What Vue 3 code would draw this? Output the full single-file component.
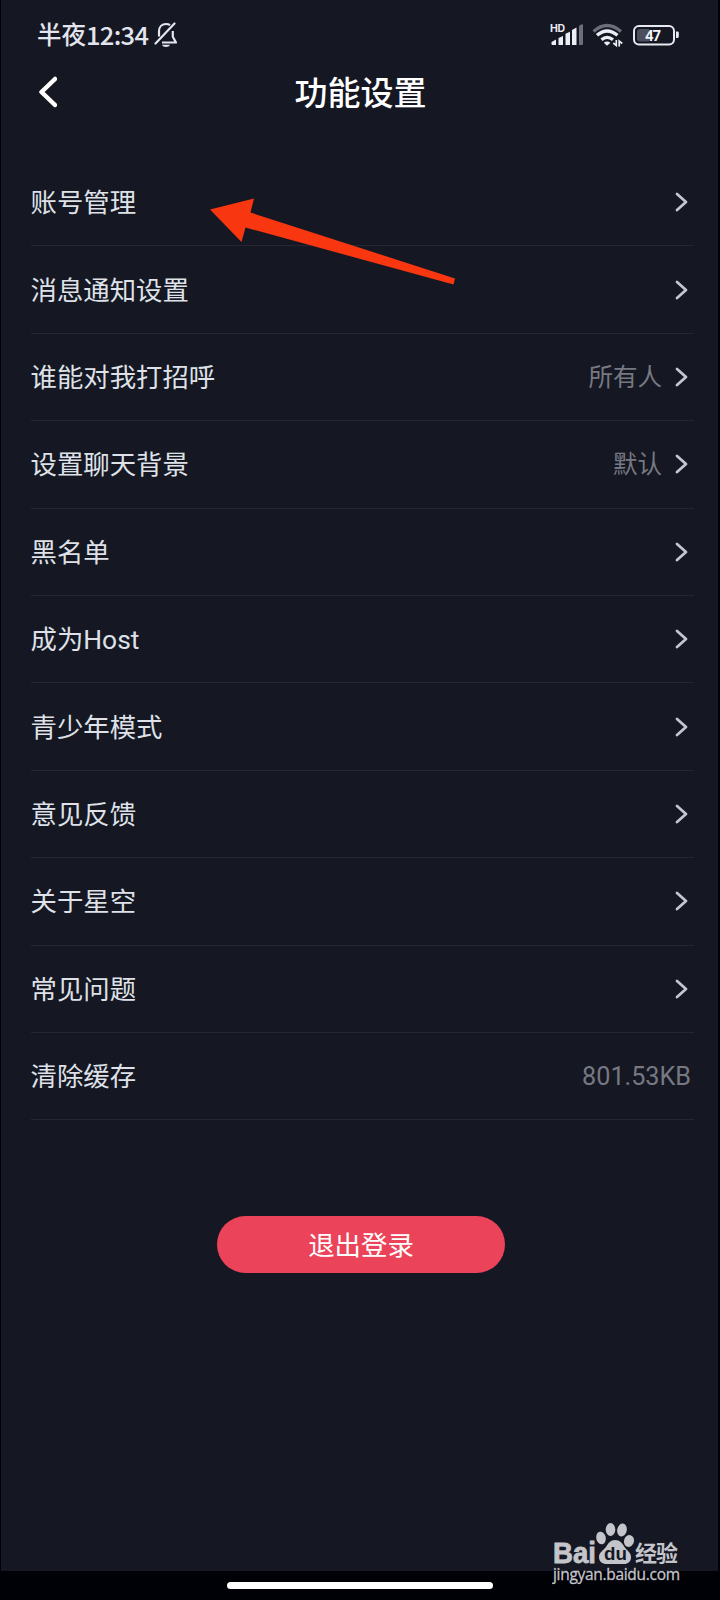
<script setup>
const rows = [
  { label: '账号管理', arrow: true },
  { label: '消息通知设置', arrow: true },
  { label: '谁能对我打招呼', value: '所有人', arrow: true },
  { label: '设置聊天背景', value: '默认', arrow: true },
  { label: '黑名单', arrow: true },
  { label: '成为Host', arrow: true },
  { label: '青少年模式', arrow: true },
  { label: '意见反馈', arrow: true },
  { label: '关于星空', arrow: true },
  { label: '常见问题', arrow: true },
  { label: '清除缓存', value: '801.53KB', arrow: false }
]
</script>

<template>
  <div class="screen">
    <header class="status-bar">
      <div class="status-left">
        <span class="period">半夜</span>
        <span class="clock">12:34</span>
        <svg class="bell" width="24" height="26" viewBox="0 0 24 26" fill="none">
          <path d="M1.5 21.5 20.5 1.5" stroke="#e3e5ee" stroke-width="2.2" stroke-linecap="round" />
          <path
            d="M5 14.5V9.5C5 4.8 8 2 12 2c1.7 0 3 .4 4 1.1M18.8 9v5.8l3.2 5.7H8"
            stroke="#e3e5ee"
            stroke-width="2.2"
            stroke-linejoin="round"
          />
          <path d="M8 22.8h8c-.7 1.5-2 2.2-4 2.2s-3.3-.7-4-2.2z" fill="#e3e5ee" />
        </svg>
      </div>
      <div class="status-right">
        <svg class="signal" width="34" height="24" viewBox="0 0 34 24">
          <text x="0" y="9" textLength="15" class="hd">HD</text>
          <g fill="#eceef5">
            <path d="M1.5 19 6 16.5V22H2.5q-1 0-1-1z" />
            <path d="M8.5 15 13 13v9H8.5z" />
            <path d="M15.5 10.8 20 8.8V22h-4.5z" />
            <path d="M22 7 26.5 4.5V22H22z" />
          </g>
          <path d="M29 3q1-1.7 4-1.7V21q0 1-1 1h-3z" fill="#6c6e7a" />
        </svg>
        <svg class="wifi" width="32" height="25" viewBox="0 0 32 25" fill="none">
          <path d="M1.5 8.5Q15 -3.5 29 8.5" stroke="#6c6e7a" stroke-width="3.2" />
          <path d="M5 12.3Q15 3.6 25.5 12.3" stroke="#eceef5" stroke-width="3.4" />
          <path d="M9.5 16.8Q15 11.8 21 16.8" stroke="#eceef5" stroke-width="3.2" />
          <path d="M11.8 19.8Q15 17 18.4 19.8L15 22.8z" fill="#eceef5" />
          <path
            d="M24.3 17v5.5l-3-2.5M27.2 23.5V18l3 2.5"
            stroke="#eceef5"
            stroke-width="1.7"
          />
        </svg>
        <svg class="battery" width="47" height="22" viewBox="0 0 47 22">
          <rect x="1" y="2" width="40" height="18.5" rx="5" fill="none" stroke="#e8eaf2" stroke-width="2" />
          <path d="M7 5h9v12.5H7q-3 0-3-3V8q0-3 3-3z" fill="#4d4f5c" />
          <path d="M43 7.5h1.5q1.3 0 1.3 1.3v3.8q0 1.4-1.3 1.4H43z" fill="#e8eaf2" />
          <text x="12" y="16.5" textLength="16" class="level">47</text>
        </svg>
      </div>
    </header>

    <nav class="title-bar">
      <svg class="back" width="20" height="32" viewBox="0 0 20 32" fill="none">
        <path
          d="M18 3 4.500 16 18 29"
          stroke="#fff"
          stroke-width="4.5"
          stroke-linecap="round"
          stroke-linejoin="round"
        />
      </svg>
      <h1 class="title">功能设置</h1>
    </nav>

    <main class="list">
      <div v-for="row in rows" :key="row.label" class="row">
        <span class="label">{{ row.label }}</span>
        <span v-if="row.value" class="value" :class="{ size: !row.arrow }">{{ row.value }}</span>
        <svg v-if="row.arrow" class="chevron" width="14" height="20" viewBox="0 0 14 20" fill="none">
          <path
            d="M2 2 11 10 2 18"
            stroke="#c3c6d2"
            stroke-width="2.8"
            stroke-linecap="round"
            stroke-linejoin="round"
          />
        </svg>
      </div>
    </main>

    <button class="logout">退出登录</button>

    <footer class="gesture-bar">
      <span class="handle"></span>
    </footer>

    <!-- hand-drawn pointer on top of the list -->
    <svg class="pointer" width="246" height="88" viewBox="0 0 246 88">
      <path d="M0 11.5 44 .5 40.5 14.5 245 80.5 243.5 86.5 35.5 29.5 31.5 44z" fill="#f83610" />
    </svg>

    <svg class="watermark" width="134" height="66" viewBox="0 0 134 66">
      <g fill="#c4c5ca">
        <text x="1" y="41.5" textLength="43" lengthAdjust="spacingAndGlyphs" class="bai">Bai</text>
        <ellipse cx="49" cy="17" rx="4.8" ry="6.3" transform="rotate(-12 49 17)" />
        <ellipse cx="58.5" cy="8.5" rx="4.8" ry="6.5" />
        <ellipse cx="70" cy="9" rx="4.8" ry="6.5" transform="rotate(10 70 9)" />
        <ellipse cx="77" cy="20" rx="5" ry="6" transform="rotate(15 77 20)" />
        <path
          d="M63 19c5 0 7 3 9.500 7 3 4 6.500 5.500 6.500 10.500 0 4-3 6.500-7 6.500H55c-5 0-8-2.500-8-7 0-4.500 4-6.500 7-10 2.500-4 4.500-7 9-7z"
        />
        <text x="83" y="40" textLength="43" class="jingyan">经验</text>
        <text x="1" y="58.5" textLength="127" class="url">jingyan.baidu.com</text>
      </g>
      <text x="52" y="39" textLength="23" lengthAdjust="spacingAndGlyphs" class="du">du</text>
    </svg>
  </div>
</template>

<style>
body {
  margin: 0;
  background: #000007;
}
</style>

<style scoped>
.screen {
  position: relative;
  box-sizing: border-box;
  width: 720px;
  height: 1600px;
  padding: 0 2px 0 1px;
  background: linear-gradient(#151722, #151722) 1px 0 / 717px 1571px no-repeat #000007;
  display: flex;
  flex-direction: column;
  font-family: Roboto, 'Noto Sans CJK SC', sans-serif;
  overflow: hidden;
}
.status-bar {
  flex: none;
  height: 58px;
  padding: 12px 38px 0 36px;
  box-sizing: border-box;
  display: flex;
  justify-content: space-between;
  align-items: center;
  color: #e3e5ee;
}
.status-left,
.status-right {
  display: flex;
  align-items: center;
}
.period {
  font-family: 'Noto Sans CJK SC', sans-serif;
  font-size: 24.5px;
  font-weight: 500;
  line-height: 30px;
  padding-bottom: 2px;
}
.clock {
  font-family: 'Noto Sans CJK SC', sans-serif;
  font-size: 25.5px;
  font-weight: 500;
  line-height: 30px;
  letter-spacing: -0.7px;
  padding-bottom: 3px;
}
.bell {
  margin-left: 6px;
}
.hd {
  font: 700 10.5px Inter, sans-serif;
  fill: #e8eaf2;
}
.wifi {
  margin-left: 8px;
}
.battery {
  margin-left: 9px;
}
.level {
  font: 700 15px Roboto, sans-serif;
  fill: #f2f3f8;
}
.title-bar {
  box-sizing: border-box;
  height: 101px;
  flex: none;
  display: flex;
  align-items: flex-start;
  padding: 18px 36px 0;
}
.back {
  flex: none;
}
.title {
  flex: 1;
  margin: -8px 18px 0 0;
  text-align: center;
  color: #fff;
  font-family: 'Noto Sans CJK SC', sans-serif;
  font-size: 33px;
  font-weight: 500;
  line-height: 46px;
}
.list {
  flex: none;
  padding: 0 24px 0 30px;
}
.row {
  box-sizing: border-box;
  height: 87.4px;
  display: flex;
  align-items: center;
  border-bottom: 1px solid #242631;
  padding-right: 5px;
}
.label {
  flex: 1;
  margin-left: -0.5px;
  padding-top: 2px;
  color: #dfe1e8;
  font-size: 26.4px;
  line-height: 38px;
}
.value {
  padding-top: 2px;
  color: #777982;
  font-size: 24.5px;
  line-height: 36px;
}
.size {
  font-size: 25.2px;
  margin-right: -2px;
}
.chevron {
  margin-left: 13px;
}
.logout {
  align-self: center;
  flex: none;
  width: 288px;
  height: 57px;
  margin-top: 96px;
  margin-left: 3px;
  padding: 0 0 2px;
  border: 0;
  border-radius: 29px;
  background: #eb4359;
  color: #fff;
  font-family: 'Noto Sans CJK SC', sans-serif;
  font-size: 26.4px;
  line-height: 54px;
}
.gesture-bar {
  height: 29px;
  margin-top: auto;
  display: flex;
  justify-content: center;
  align-items: center;
}
.handle {
  width: 266px;
  height: 7px;
  border-radius: 4px;
  background: #fff;
}
.pointer {
  position: absolute;
  left: 210px;
  top: 198px;
}
.watermark {
  position: absolute;
  left: 552px;
  top: 1521px;
}
.bai {
  font: 700 29px 'Liberation Sans', sans-serif;
  stroke: #c4c5ca;
  stroke-width: 0.8px;
}
.du {
  font: 700 18px 'Liberation Sans', sans-serif;
  fill: #151722;
}
.jingyan {
  font: 700 22px 'Noto Sans CJK SC', sans-serif;
}
.url {
  font: 500 15.5px 'Open Sans', sans-serif;
  stroke: #c4c5ca;
  stroke-width: 0.3px;
}
</style>
